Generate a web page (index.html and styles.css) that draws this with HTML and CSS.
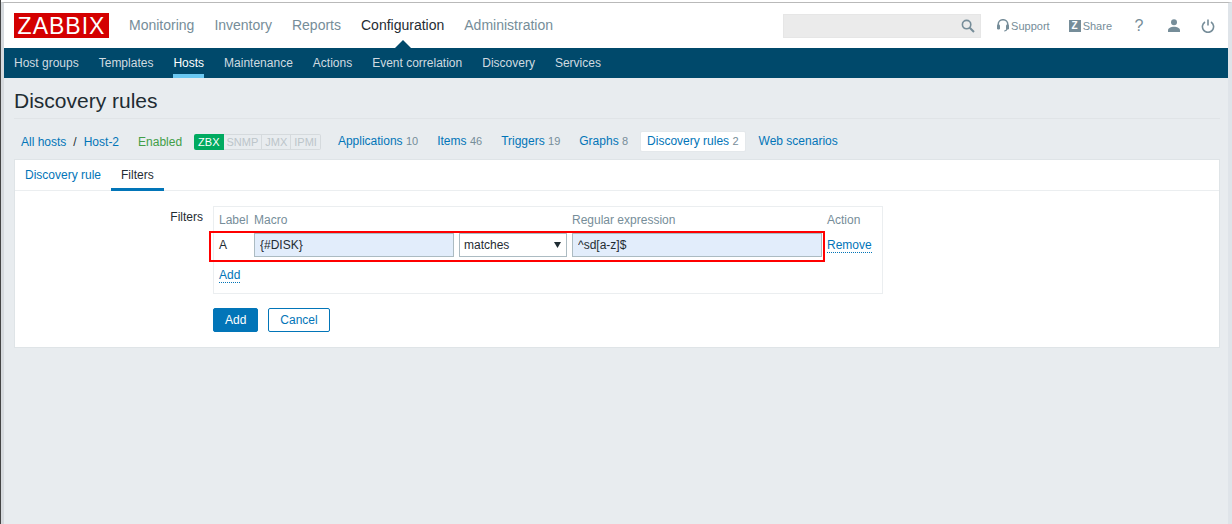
FILE: index.html
```html
<!DOCTYPE html>
<html lang="en">
<head>
  <meta charset="UTF-8">
  <title>Discovery rules</title>
  <link rel="stylesheet" href="styles.css">
</head>
<body>
  <div class="page">
    <header class="top">
      <div class="logo">ZABBIX</div>
      <nav class="main-menu">
        <a>Monitoring</a>
        <a>Inventory</a>
        <a>Reports</a>
        <a class="selected">Configuration</a>
        <a>Administration</a>
      </nav>
      <div class="top-tools">
        <div class="search">
          <svg width="14" height="14" viewBox="0 0 14 14" fill="none" stroke="#768d99" stroke-width="1.6"><circle cx="5.6" cy="5.6" r="4.2"/><path d="M8.7 8.7L13 13" stroke-width="2"/></svg>
        </div>
        <a class="tool support">
          <svg width="12" height="13" viewBox="0 0 12 13" fill="none" stroke="#768d99" stroke-width="1.5"><path d="M1.2 7V5.5a4.8 4.8 0 0 1 9.6 0V7"/><rect x="0" y="5.5" width="3" height="5" rx="1.2" fill="#768d99" stroke="none"/><rect x="9" y="5.5" width="3" height="5" rx="1.2" fill="#768d99" stroke="none"/><path d="M10 10c-.5 1.5-1.5 2-2.8 2" stroke-width="1.2"/></svg>
          Support
        </a>
        <a class="tool share"><span class="z-box">Z</span>Share</a>
        <a class="icon-btn help">?</a>
        <a class="icon-btn">
          <svg width="14" height="13" viewBox="0 0 14 13" fill="#768d99"><circle cx="7" cy="3.2" r="3"/><path d="M1 13v-1.6C1 9.2 4 7.8 7 7.8s6 1.4 6 3.6V13z"/></svg>
        </a>
        <a class="icon-btn">
          <svg width="14" height="14" viewBox="0 0 14 14" fill="none" stroke="#768d99" stroke-width="1.6"><path d="M4 3a5.6 5.6 0 1 0 6 0"/><path d="M7 0.5v6"/></svg>
        </a>
      </div>
    </header>

    <nav class="sub-menu">
      <a>Host groups</a>
      <a>Templates</a>
      <a class="selected">Hosts</a>
      <a>Maintenance</a>
      <a>Actions</a>
      <a>Event correlation</a>
      <a>Discovery</a>
      <a>Services</a>
    </nav>

    <main class="content">
      <h1 class="title">Discovery rules</h1>

      <div class="host-nav">
        <a class="crumb">All hosts</a>
        <span class="sep">/</span>
        <a class="crumb host-name">Host-2</a>
        <span class="enabled">Enabled</span>
        <div class="status">
          <span class="on">ZBX</span><span>SNMP</span><span>JMX</span><span>IPMI</span>
        </div>
        <a class="host-link first">Applications <small>10</small></a>
        <a class="host-link">Items <small>46</small></a>
        <a class="host-link">Triggers <small>19</small></a>
        <a class="host-link">Graphs <small>8</small></a>
        <a class="host-link current">Discovery rules <small>2</small></a>
        <a class="host-link">Web scenarios</a>
      </div>

      <section class="card">
        <div class="tabs">
          <a>Discovery rule</a>
          <a class="active">Filters</a>
        </div>
        <form class="form">
          <div class="form-row">
            <label class="form-label">Filters</label>
            <div class="filter-box">
              <div class="filter-grid">
                <span class="head">Label</span>
                <span class="head">Macro</span>
                <span></span>
                <span class="head">Regular expression</span>
                <span class="head">Action</span>

                <span class="cell">A</span>
                <input class="field" type="text" value="{#DISK}">
                <div class="select-wrap">
                  <select class="field plain">
                    <option>matches</option>
                  </select>
                  <svg class="arrow" width="7" height="6" viewBox="0 0 7 6" fill="#1f2c33"><path d="M0 0h7L3.5 6z"/></svg>
                </div>
                <input class="field" type="text" value="^sd[a-z]$">
                <a class="dotted">Remove</a>
              </div>
              <a class="dotted add-link">Add</a>
              <div class="highlight"></div>
            </div>
          </div>
          <div class="buttons">
            <button class="btn primary" type="button">Add</button>
            <button class="btn" type="button">Cancel</button>
          </div>
        </form>
      </section>
    </main>
  </div>
</body>
</html>
```

FILE: styles.css
```css
html, body { margin: 0; height: 524px; overflow: hidden; }
body { background: #fff; border-left: 1px solid #444; font-family: "Liberation Sans", Arial, sans-serif; font-size: 12px; color: #1f2c33; }
a { color: #0275b8; }

.page { height: 522px; margin-top: 2px; box-sizing: border-box; background: #e8ecef; border-top: 1px solid #b9b9b9; border-left: 3px solid #d6dade; border-right: 4px solid #dfe4e9; display: flex; flex-direction: column; }
.top { height: 45px; flex: none; background: #fff; display: flex; align-items: center; padding: 0 0 0 10px; }
.logo { width: 95px; height: 25px; background: #d40000; color: #fff; font-size: 23px; line-height: 26px; letter-spacing: 1px; text-align: center; flex: none; }
.main-menu { display: flex; margin-left: 10px; }
.main-menu a { padding: 0 10px; font-size: 14px; line-height: 45px; color: #768d99; position: relative; }
.main-menu a.selected { color: #1f2c33; }
.main-menu a.selected::after { content: ""; position: absolute; left: 50%; bottom: 0; margin-left: -8px; border: 8px solid transparent; border-top: 0; border-bottom-color: #00496b; }

.top-tools { margin-left: auto; display: flex; align-items: center; }
.search { width: 198px; height: 24px; box-sizing: border-box; background: #ebebeb; border: 1px solid #e6e6e6; display: flex; align-items: center; justify-content: flex-end; padding-right: 5px; margin-right: 16px; }
.tool { display: flex; align-items: center; font-size: 11px; color: #768d99; }
.support svg { margin-right: 2px; }
.support { margin-right: 19px; }
.z-box { width: 12px; height: 12px; background: #768d99; color: #fff; font-size: 10px; line-height: 12px; font-weight: bold; text-align: center; margin-right: 2px; }
.share { margin-right: 20px; }
.icon-btn { width: 14px; display: flex; justify-content: center; margin-right: 20px; color: #768d99; }
.icon-btn:last-child { margin-right: 13px; }
.help { font-size: 16px; line-height: 18px; margin-right: 21px; }

.sub-menu { height: 30px; flex: none; background: #00496b; display: flex; }
.sub-menu a { margin: 0 10px; line-height: 30px; color: #d1dbe0; box-sizing: border-box; height: 30px; }
.sub-menu a.selected { color: #fff; border-bottom: 4px solid #6ac8f2; }

.content { flex: 1; padding: 0 8px 0 10px; }
.title { margin: 0; height: 41px; border-bottom: 1px solid #e0e4e7; box-sizing: border-box; font-size: 21px; font-weight: normal; line-height: 46px; color: #1f2c33; }

.host-nav { display: flex; align-items: center; height: 40px; box-sizing: border-box; padding-top: 5px; margin-left: 7px; }
.sep { margin: 0 7px; color: #1f2c33; }
.enabled { margin-left: 19px; color: #429e47; }
.status { display: flex; margin-left: 12px; height: 16px; margin-right: 8px; font-size: 11px; }
.status span { padding: 0 3px; line-height: 14px; border: 1px solid #d5dadd; border-left: 0; color: #bcc5ca; }
.status span.on { background: #00aa60; border: 0; line-height: 16px; color: #fff; border-radius: 2px 0 0 2px; padding: 0 4px; }
.status span:last-child { border-radius: 0 2px 2px 0; }
.host-link { padding: 0 7px; margin: 0 3px 0 2px; line-height: 21px; height: 21px; border-radius: 2px; }
.host-link small { font-size: 11px; color: #768d99; }
.host-link.current { background: #fff; border: 1px solid #e4e8eb; box-sizing: border-box; line-height: 19px; padding: 0 6px; margin-right: 4px; }

.card { background: #fff; border: 1px solid #dfe4e7; height: 189px; box-sizing: border-box; }
.tabs { height: 31px; box-sizing: border-box; border-bottom: 1px solid #ebeef0; display: flex; }
.tabs a { padding: 0 10px; line-height: 31px; height: 31px; box-sizing: border-box; }
.tabs a.active { color: #1f2c33; border-bottom: 3px solid #0275b8; }

.form { padding-top: 15px; }
.form-row { display: flex; }
.form-label { width: 188px; text-align: right; line-height: 22px; flex: none; margin-right: 10px; }
.filter-box { position: relative; width: 670px; height: 88px; box-sizing: border-box; border: 1px solid #ebeef0; padding: 6px 5px 5px; }
.filter-grid { display: grid; grid-template-columns: 30px 200px 108px 250px auto; column-gap: 5px; align-items: center; }
.head { color: #768d99; line-height: 14px; margin-bottom: 6px; }
.cell { line-height: 24px; }
.field { width: 100%; height: 24px; box-sizing: border-box; margin: 0; padding: 0 5px; border: 1px solid #acbbc2; background: #e2edfb; font: 12px "Liberation Sans", Arial, sans-serif; color: #1f2c33; border-radius: 0; outline: 0; }
.plain { background: #fff; padding: 0 4px; appearance: none; -webkit-appearance: none; }
.select-wrap { position: relative; height: 24px; }
.arrow { position: absolute; right: 6px; top: 9px; }
.dotted { border-bottom: 1px dotted #0275b8; line-height: 14px; justify-self: start; }
.add-link { display: inline-block; margin-top: 11px; }
.highlight { position: absolute; left: -5px; top: 24px; width: 616px; height: 31px; box-sizing: border-box; border: 2px solid #f00; }

.buttons { display: flex; gap: 10px; margin-left: 198px; margin-top: 14px; }
.btn { height: 24px; padding: 0 11px; box-sizing: border-box; border: 1px solid #0275b8; border-radius: 2px; background: #fff; color: #0275b8; font: 12px "Liberation Sans", Arial, sans-serif; }
.btn.primary { background: #0275b8; color: #fff; }
```
